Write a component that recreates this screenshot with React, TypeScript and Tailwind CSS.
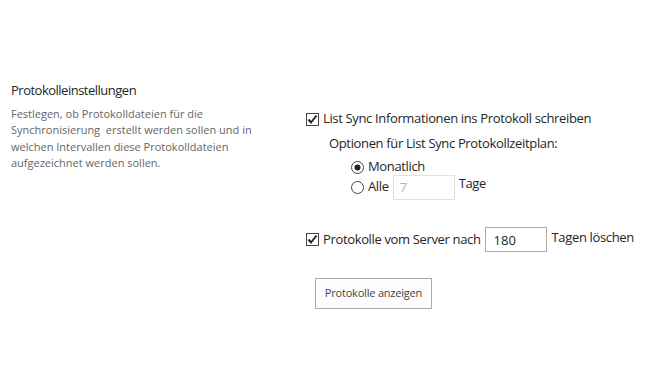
export default function App() {
  return (
    <div className="w-[649px] h-[392px] bg-white text-[#444] [font-family:'Open_Sans',sans-serif] flex pt-[80px]">
      {/* left description */}
      <div className="w-[306px] pl-[11px] pr-[30px]">
        <div className="text-[13px] leading-[20px] tracking-[-0.5px] text-[#262626]">Protokolleinstellungen</div>
        <p className="mt-[6px] text-[11px] leading-[16.4px] text-[#666]">
          Festlegen, ob Protokolldateien für die Synchronisierung&nbsp; erstellt werden sollen und in welchen
          Intervallen diese Protokolldateien aufgezeichnet werden sollen.
        </p>
      </div>

      {/* right options */}
      <div className="pt-[30px] text-[13px] tracking-[-0.35px] text-[#262626]">
        <label className="flex items-center gap-[4px] h-[18px]">
          <Checkbox />
          <span>List Sync Informationen ins Protokoll schreiben</span>
        </label>
        <div className="ml-[23px] mt-[6px] h-[18px] leading-[18px]">Optionen für List Sync Protokollzeitplan:</div>
        <div className="ml-[45px] mt-[6px]">
          <label className="flex items-center gap-[4px] h-[18px]">
            <Radio checked />
            <span>Monatlich</span>
          </label>
          <label className="flex items-center gap-[4px] h-[24px] -mt-[1px]">
            <Radio />
            <span>Alle</span>
            <input
              readOnly
              value="7"
              className="w-[62px] h-[25px] border border-[#e1e1e1] px-[6px] text-[13px] text-[#b1b1b1] outline-none"
            />
            <span className="self-start -mt-[1px]">Tage</span>
          </label>
        </div>
        <label className="flex items-center gap-[4px] mt-[28px] h-[25px]">
          <Checkbox />
          <span>Protokolle vom Server nach</span>
          <input
            readOnly
            value="180"
            className="w-[62px] h-[25px] border border-[#ababab] px-[8px] text-[13px] tracking-normal text-[#262626] outline-none"
          />
          <span className="self-start mt-[1px] ml-[1px]">Tagen löschen</span>
        </label>
        <button className="ml-[9px] mt-[26px] w-[117px] h-[31px] border border-[#ababab] bg-[#fdfdfd] text-[11px] tracking-[-0.2px] text-[#444]">
          Protokolle anzeigen
        </button>
      </div>
    </div>
  );
}

function Checkbox() {
  return (
    <svg width="13" height="13" viewBox="0 0 13 13" className="shrink-0">
      <rect x="0.5" y="0.5" width="12" height="12" fill="#fff" stroke="#444" />
      <path d="M2.5 6.5 L5 9.5 L10.5 2.5" fill="none" stroke="#222" strokeWidth="2" />
    </svg>
  );
}

function Radio({ checked = false }: { checked?: boolean }) {
  return (
    <svg width="13" height="13" viewBox="0 0 13 13" className="shrink-0">
      <circle cx="6.5" cy="6.5" r="6" fill="#fff" stroke="#444" />
      {checked && <circle cx="6.5" cy="6.5" r="3" fill="#222" />}
    </svg>
  );
}
